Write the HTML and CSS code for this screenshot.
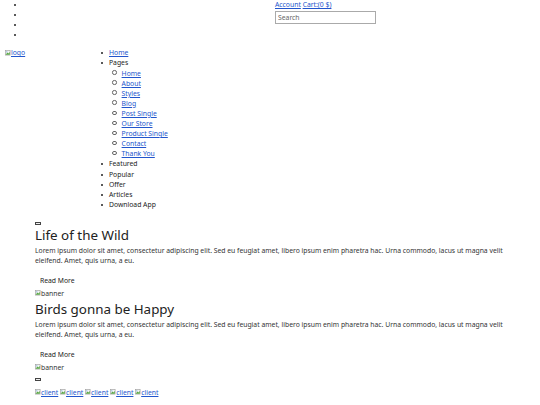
FILE: index.html
```html
<!DOCTYPE html>
<html>
<head>
<meta charset="utf-8">
<link rel="stylesheet" href="styles.css">
</head>
<body>
<header class="top">
  <ul class="top-list"><li></li><li></li><li></li><li></li></ul>
  <div class="top-right">
    <div class="links"><a href="#">Account</a> <a href="#">Cart:(0 $)</a></div>
    <input class="search" type="text" placeholder="Search">
  </div>
</header>
<div class="navrow">
  <div class="logo"><a href="#" class="img"><svg class="broken" viewBox="0 0 10 10"><rect x="0.5" y="0.5" width="8" height="8" fill="#f4f4f4" stroke="#9a9a9a"/><path d="M1 8 L4 4 L6 6 L8 3 L8 8 Z" fill="#5aa845"/><circle cx="3" cy="3" r="1" fill="#6aa0d8"/></svg>logo</a></div>
  <ul class="nav">
    <li><a href="#">Home</a></li>
    <li>Pages
      <ul class="sub">
        <li><a href="#">Home</a></li>
        <li><a href="#">About</a></li>
        <li><a href="#">Styles</a></li>
        <li><a href="#">Blog</a></li>
        <li><a href="#">Post Single</a></li>
        <li><a href="#">Our Store</a></li>
        <li><a href="#">Product Single</a></li>
        <li><a href="#">Contact</a></li>
        <li><a href="#">Thank You</a></li>
      </ul>
    </li>
    <li>Featured</li>
    <li>Popular</li>
    <li>Offer</li>
    <li>Articles</li>
    <li>Download App</li>
  </ul>
</div>
<main class="content">
  <button class="tiny"></button>
  <article class="post">
    <h2>Life of the Wild</h2>
    <p>Lorem ipsum dolor sit amet, consectetur adipiscing elit. Sed eu feugiat amet, libero ipsum enim pharetra hac. Urna commodo, lacus ut magna velit eleifend. Amet, quis urna, a eu.</p>
    <button class="more">Read More</button>
  </article>
  <div class="banner"><svg class="broken" viewBox="0 0 10 10"><rect x="0.5" y="0.5" width="8" height="8" fill="#f4f4f4" stroke="#9a9a9a"/><path d="M1 8 L4 4 L6 6 L8 3 L8 8 Z" fill="#5aa845"/><circle cx="3" cy="3" r="1" fill="#6aa0d8"/></svg>banner</div>
  <article class="post">
    <h2>Birds gonna be Happy</h2>
    <p>Lorem ipsum dolor sit amet, consectetur adipiscing elit. Sed eu feugiat amet, libero ipsum enim pharetra hac. Urna commodo, lacus ut magna velit eleifend. Amet, quis urna, a eu.</p>
    <button class="more">Read More</button>
  </article>
  <div class="banner"><svg class="broken" viewBox="0 0 10 10"><rect x="0.5" y="0.5" width="8" height="8" fill="#f4f4f4" stroke="#9a9a9a"/><path d="M1 8 L4 4 L6 6 L8 3 L8 8 Z" fill="#5aa845"/><circle cx="3" cy="3" r="1" fill="#6aa0d8"/></svg>banner</div>
  <button class="tiny tiny2"></button>
  <div class="clients">
    <a href="#"><svg class="broken" viewBox="0 0 10 10"><rect x="0.5" y="0.5" width="8" height="8" fill="#f4f4f4" stroke="#9a9a9a"/><path d="M1 8 L4 4 L6 6 L8 3 L8 8 Z" fill="#5aa845"/><circle cx="3" cy="3" r="1" fill="#6aa0d8"/></svg>client</a>
    <a href="#"><svg class="broken" viewBox="0 0 10 10"><rect x="0.5" y="0.5" width="8" height="8" fill="#f4f4f4" stroke="#9a9a9a"/><path d="M1 8 L4 4 L6 6 L8 3 L8 8 Z" fill="#5aa845"/><circle cx="3" cy="3" r="1" fill="#6aa0d8"/></svg>client</a>
    <a href="#"><svg class="broken" viewBox="0 0 10 10"><rect x="0.5" y="0.5" width="8" height="8" fill="#f4f4f4" stroke="#9a9a9a"/><path d="M1 8 L4 4 L6 6 L8 3 L8 8 Z" fill="#5aa845"/><circle cx="3" cy="3" r="1" fill="#6aa0d8"/></svg>client</a>
    <a href="#"><svg class="broken" viewBox="0 0 10 10"><rect x="0.5" y="0.5" width="8" height="8" fill="#f4f4f4" stroke="#9a9a9a"/><path d="M1 8 L4 4 L6 6 L8 3 L8 8 Z" fill="#5aa845"/><circle cx="3" cy="3" r="1" fill="#6aa0d8"/></svg>client</a>
    <a href="#"><svg class="broken" viewBox="0 0 10 10"><rect x="0.5" y="0.5" width="8" height="8" fill="#f4f4f4" stroke="#9a9a9a"/><path d="M1 8 L4 4 L6 6 L8 3 L8 8 Z" fill="#5aa845"/><circle cx="3" cy="3" r="1" fill="#6aa0d8"/></svg>client</a>
  </div>
</main>
</body>
</html>
```
FILE: styles.css
```css
html, body {
  margin: 0;
  padding: 0;
  background: #fff;
}
body {
  font-family: "Noto Sans", "Open Sans", sans-serif;
  font-size: 6.8px;
  line-height: 10.1px;
  color: #222;
}
a { color: #2255cc; }
ul { list-style: none; margin: 0; }
.top-list li::before,
.nav li::before {
  content: "";
  display: inline-block;
  width: 2px;
  height: 2px;
  border-radius: 50%;
  background: #222;
  margin-left: -8.5px;
  margin-right: 6.5px;
  vertical-align: 1px;
}
.nav .sub li::before {
  width: 2.4px;
  height: 2.4px;
  background: transparent;
  border: 0.5px solid #666;
  margin-left: -8.6px;
  margin-right: 4.8px;
}
.top {
  display: flex;
}
.top-list {
  width: 270px;
  padding: 0 0 0 22px;
  box-sizing: border-box;
}
.top-list li { height: 10.1px; }
.top-right {
  padding-left: 5px;
}
.links { line-height: 10.5px; }
.search {
  display: block;
  width: 101px;
  height: 13px;
  box-sizing: border-box;
  border: 1px solid #aaa;
  padding: 0 2px;
  font: inherit;
  font-size: 6.8px;
  color: #333;
  margin: 0;
}
.search::placeholder { color: #666; }
.navrow {
  display: flex;
  margin-top: 8px;
}
.logo {
  width: 90px;
  padding-left: 5px;
  box-sizing: border-box;
}
.img { display: inline-flex; align-items: center; }
.broken {
  width: 6px;
  height: 6px;
  vertical-align: 0;
}
.nav {
  padding: 0 0 0 19px;
}
.nav .sub {
  padding: 0 0 0 12px;
}
.content {
  padding: 12px 35px 0;
}
.tiny {
  display: block;
  width: 6px;
  height: 3px;
  box-sizing: border-box;
  padding: 0;
  border: 1px solid #444;
  background: #eee;
  margin: 0;
}
.post h2 {
  font-weight: 400;
  font-size: 13.4px;
  line-height: 18px;
  margin: 1px 0 2px;
  color: #222;
}
.post p {
  margin: 0;
  line-height: 10px;
  color: #333;
}
.more {
  font: inherit;
  color: #222;
  background: none;
  border: none;
  padding: 0 5px;
  margin: 7px 0 0;
  line-height: 15px;
  display: block;
}
.banner {
  line-height: 11px;
  color: #333;
}
.tiny2 { margin-top: 5px; }
.clients { margin-top: 7px; line-height: 10px; }
```
